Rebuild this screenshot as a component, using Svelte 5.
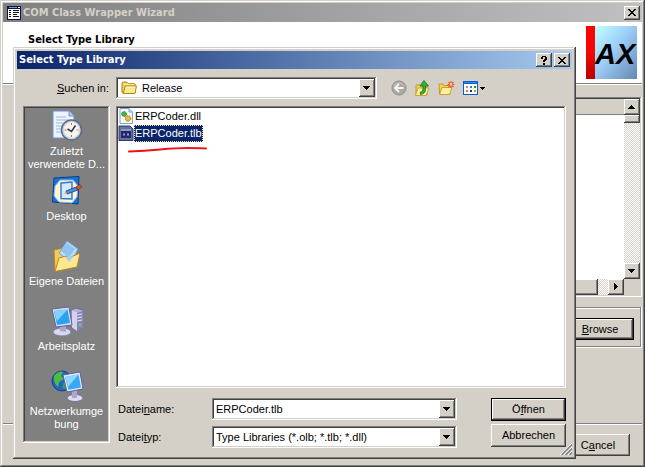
<script>
  const places = [
    { id: 'recent', lines: ['Zuletzt', 'verwendete D...'] },
    { id: 'desktop', lines: ['Desktop'] },
    { id: 'documents', lines: ['Eigene Dateien'] },
    { id: 'computer', lines: ['Arbeitsplatz'] },
    { id: 'network', lines: ['Netzwerkumge', 'bung'] }
  ];
  const files = ['ERPCoder.dll', 'ERPCoder.tlb'];
  let selected = $state('ERPCoder.tlb');
  let fileName = $state('ERPCoder.tlb');

  function pick(name) {
    selected = name;
    fileName = name;
  }
</script>

{#snippet arrow(dir)}
  <svg class="arrow" viewBox="0 0 8 8" width="8" height="8" shape-rendering="crispEdges" aria-hidden="true">
    {#if dir === 'up'}<path d="M3 2h1v1h1v1h1v1h1v1H0V5h1V4h1V3h1z" />
    {:else if dir === 'right'}<path d="M2 0h1v1h1v1h1v1h1v1H5v1H4v1H3v1H2z" />
    {:else}<path d="M0 2h7v1H6v1H5v1H4v1H3V5H2V4H1V3H0z" />{/if}
  </svg>
{/snippet}

{#snippet cross()}
  <svg viewBox="0 0 8 7" width="8" height="7" shape-rendering="crispEdges" aria-hidden="true">
    <path d="M0 0h2v1h1v1h2V1h1V0h2v1H7v1H6v1H5v1h1v1h1v1h1v1H6V6H5V5H3v1H2v1H0V6h1V5h1V4h1V3H2V2H1V1H0z" />
  </svg>
{/snippet}

{#snippet folder()}
  <path d="M1 3.5Q1 2 2.5 2h3L7 3.5h6q1.2 0 1.2 1.2V13H2.2Q1 13 1 12z" fill="#f4cf55" stroke="#a87a12" />
  <path d="M2.5 4.2h11" stroke="#fff3b0" />
  <path d="M4.2 6h11.3L14 13.5H2.2z" fill="#ffe98f" stroke="#b68718" />
  <path d="M5 7.2h9" stroke="#fffbd9" />
{/snippet}

<div class="wizard frame">
  <header class="titlebar inactive">
    <svg class="app-icon" viewBox="0 0 14 14" width="14" height="14" shape-rendering="crispEdges" aria-hidden="true">
      <path d="M0 0h14v14H0z" fill="#0a1450" /><path d="M1 3h12v10H1z" fill="#fff" />
      <path d="M2 1h8v1H2z" fill="#8090d0" /><path d="M11 1h2v1h-2z" fill="#fff" />
      <path d="M2 4h2v1H2zm0 2h2v1H2zm0 2h2v1H2zm0 2h2v1H2zM6 4h6v1H6zm0 2h6v1H6zm0 2h4v1H6zm0 2h6v1H6z" fill="#111" />
    </svg>
    <span class="caption">COM Class Wrapper Wizard</span>
    <button class="raised tool" aria-label="Close">{@render cross()}</button>
  </header>

  <section class="banner">
    <h1>Select Type Library</h1>
    <svg class="logo" viewBox="0 0 51 53" width="51" height="53" aria-label="AX" role="img">
      <defs>
        <linearGradient id="sky" x1="0" y1="0" x2="1" y2="1">
          <stop offset="0" stop-color="#c2ffff" /><stop offset=".45" stop-color="#9ccdf8" /><stop offset="1" stop-color="#6488b0" />
        </linearGradient>
        <linearGradient id="red" x1="0" y1="0" x2="0" y2="1">
          <stop offset="0" stop-color="#f00" /><stop offset=".5" stop-color="#f40808" /><stop offset="1" stop-color="#b80000" />
        </linearGradient>
      </defs>
      <path d="M9 0h42v53H9z" fill="url(#sky)" /><path d="M0 0h9v53H0z" fill="url(#red)" />
      <text x="9" y="38" font-family="Liberation Sans, sans-serif" font-size="29" font-weight="bold" font-style="italic">AX</text>
    </svg>
  </section>

  <main class="wizard-body">
    <div class="list-panel sunken">
      <div class="list-area">
        <div class="list-head"></div>
      </div>
      <div class="vscroll dither">
        <button class="raised sb" aria-label="Scroll up">{@render arrow('up')}</button>
        <div class="raised vthumb"></div>
        <span class="spring"></span>
        <button class="raised sb" aria-label="Scroll down">{@render arrow('down')}</button>
      </div>
      <div class="hscroll">
        <div class="raised hthumb"></div>
        <div class="dither gap"></div>
        <button class="raised sb" aria-label="Scroll right">{@render arrow('right')}</button>
      </div>
    </div>
    <div class="group">
      <button class="push default browse"><span><u>B</u>rowse</span></button>
    </div>
  </main>
  <footer class="wizard-foot">
    <button class="push cancel"><span>C<u>a</u>ncel</span></button>
  </footer>
</div>

<div class="dialog frame" role="dialog" aria-labelledby="dlg-title">
  <header class="titlebar active">
    <span class="caption" id="dlg-title">Select Type Library</span>
    <button class="raised tool help" aria-label="Help">
      <svg viewBox="0 0 6 9" width="6" height="9" shape-rendering="crispEdges" aria-hidden="true">
        <path d="M1 0h4v1h1v3H5v1H4v1H2V4h1V3h1V1H2v2H0V1h1zM2 7h2v2H2z" />
      </svg>
    </button>
    <button class="raised tool" aria-label="Schließen">{@render cross()}</button>
  </header>

  <div class="dialog-body">
    <label class="look-label" for="look"><span><u>S</u>uchen in:</span></label>
    <div class="look-row">
      <div class="combo sunken look">
        <svg class="combo-icon" viewBox="0 0 17 16" width="17" height="16" aria-hidden="true">{@render folder()}</svg>
        <select id="look"><option>Release</option></select>
        <span class="raised drop">{@render arrow('down')}</span>
      </div>
      <div class="tools">
        <button class="flat" aria-label="Zurück">
          <svg viewBox="0 0 16 16" width="16" height="16" aria-hidden="true">
            <circle cx="8" cy="8" r="7" fill="#aaa9a5" stroke="#8e8d89" />
            <path d="M2.5 6a6 5 0 0 1 11 0" fill="none" stroke="#c8c7c3" />
            <path d="M8 4L4 8l4 4M4.5 8H12.5" fill="none" stroke="#f4f3ef" stroke-width="2" />
          </svg>
        </button>
        <button class="flat" aria-label="Übergeordneter Ordner">
          <svg viewBox="0 0 17 16" width="17" height="16" aria-hidden="true">
            <path d="M2 5h4l1 1h6v9H2z" fill="#f6d04e" stroke="#c39a2a" />
            <path d="M4 8h11l-3 7.5H1.5z" fill="#fff0a0" stroke="#c9a13a" />
            <path d="M6 12.5q3-.5 3-3.500V6H6l4-5.500L14.500 6h-3v3.500q0 4-5 5z" fill="#35b035" stroke="#137513" stroke-width=".8" />
          </svg>
        </button>
        <button class="flat" aria-label="Neuer Ordner">
          <svg viewBox="0 0 17 16" width="17" height="16" aria-hidden="true">
            <path d="M1 4h4l1 1.500h6V14H1.500z" fill="#f6d04e" stroke="#c39a2a" />
            <path d="M4 7.500h10l-2.500 7H1.500z" fill="#fff0a0" stroke="#c9a13a" />
            <path d="M13 1v7M9.500 4.500h7M10.500 2l5 5M15.500 2l-5 5" stroke="#f04a1c" stroke-width="1.100" />
            <circle cx="13" cy="4.500" r="1.400" fill="#ffc0a0" />
          </svg>
        </button>
        <button class="flat" aria-label="Ansichten">
          <svg viewBox="0 0 23 16" width="23" height="16" shape-rendering="crispEdges" aria-hidden="true">
            <path d="M1 1h15v14H1z" fill="#0a5cd0" /><path d="M2 4h13v10H2z" fill="#fff" /><path d="M2 2h13v1H2z" fill="#2f86ee" />
            <path d="M4 6h2v2H4z" fill="#9a8fc0" /><path d="M8 6h2v2H8z" fill="#2878d8" /><path d="M12 6h2v2h-2z" fill="#189018" />
            <path d="M4 10h2v2H4z" fill="#e87040" /><path d="M8 10h2v2H8z" fill="#103088" /><path d="M12 10h2v2h-2z" fill="#c89010" />
            <path d="M18 7h5v1h-1v1h-1v1h-1V9h-1V8h-1z" />
          </svg>
        </button>
      </div>
    </div>

    <nav class="places sunken" aria-label="Orte">
      {#each places as place}
        <button class="place">
          <svg viewBox="0 0 32 32" width="32" height="32" aria-hidden="true">
            {#if place.id === 'recent'}
              <path d="M2 1h16l5 5v22H2z" fill="#edf4ff" stroke="#6e92cf" />
              <path d="M18 1v5h5" fill="#b7cff4" stroke="#6e92cf" />
              <path d="M5 7h10M5 10h14M5 13h8M5 16h6M5 19h5M5 22h6" stroke="#9cb9e8" />
              <circle cx="20.500" cy="20" r="10" fill="#bcd5ef" stroke="#606b7c" stroke-width="1.500" />
              <circle cx="20.500" cy="20" r="7.500" fill="#fff3e8" stroke="#e8f2fb" />
              <path d="M16.500 19l4 2.500 4-6" fill="none" stroke="#243b66" stroke-width="1.600" />
              <path d="M20.500 13v2M20.500 25v2M13.500 20h2M25.500 20h2" stroke="#ca6c38" />
            {:else if place.id === 'desktop'}
              <path d="M3 3l25-1.500L27 29 1.500 27z" fill="#1674d8" stroke="#0b3c8c" stroke-linejoin="round" />
              <path d="M9 5h13l5 6-1 11-5 6-13-1-5-6 1-10z" fill="#fff5cf" stroke="#7fb5ee" />
              <path d="M10 8l11-1v17l-11-.5z" fill="#d6e9ff" stroke="#2f75cc" stroke-width="1.400" />
              <path d="M15 16l10-4 2 3-11 4z" fill="#4a8ee0" stroke="#173c78" stroke-width=".8" />
              <path d="M25 12l4-2.500 2 2.500-4 3z" fill="#e2502c" stroke="#7c2614" stroke-width=".7" />
              <path d="M12.500 19l2.500-3 1 3z" fill="#e8b96a" />
            {:else if place.id === 'documents'}
              <path d="M3 10l9-2 3 3v18L4 31z" fill="#f5cb55" stroke="#b4862a" />
              <path d="M16 1l11 8-7 14-12-10z" fill="#b9dcfb" stroke="#6aa5df" />
              <path d="M16 3l8 6-6 8-8-6z" fill="#8ec3f4" />
              <path d="M8 18l7-2 3 2 11-5-3 14-22 4.500z" fill="#ffe78e" stroke="#b4862a" />
              <path d="M14 17l9-1-5 6z" fill="#a6d0f0" />
            {:else if place.id === 'computer'}
              <path d="M20 5l5-2 7 2v18l-6 3-6-4z" fill="#b3b0da" stroke="#6b689a" />
              <path d="M21 5.500l5 2V26l-5-3.500z" fill="#d3d1ec" />
              <path d="M26 8l5.500-2v17L26 26z" fill="#8885bd" />
              <path d="M26 10l5-1M26 13l5-1M26 16l5-1" stroke="#e6e5f5" />
              <circle cx="29" cy="20" r="1.200" fill="#5fe04c" />
              <ellipse cx="11" cy="27" rx="9" ry="4" fill="#d9d8ee" stroke="#7d7ba6" />
              <path d="M9 19l6 1v7l-6-1z" fill="#a9a6cf" />
              <path d="M1 4l17-2 3 18-16 2z" fill="#dcdcf2" stroke="#5d62a0" />
              <path d="M3 6l13.500-1.500L19 18 6 20z" fill="#2ba1f2" />
              <path d="M3 6l13.500-1.500L6 16z" fill="#80d3ff" />
            {:else}
              <circle cx="11" cy="11" r="10" fill="#2463c6" stroke="#163f88" />
              <path d="M3 6q5-6 9-4l-2 4 3 3-5 3-1 5q-5-4-4-11z" fill="#4dbd3d" />
              <path d="M13 12l5 1-3 6-4-1z" fill="#3da632" />
              <ellipse cx="24" cy="28" rx="8" ry="3.500" fill="#dcdcf0" stroke="#7774a4" />
              <path d="M21 20l5 1v7h-5z" fill="#aaa7d0" />
              <path d="M12 5l17-3 3 17-16 3z" fill="#e4e6f6" stroke="#5d62a0" />
              <path d="M14 7l13.500-2.500L30 17.500l-12.500 2.300z" fill="#36a8f4" />
              <path d="M14 7l13.500-2.500L17 17z" fill="#8ad8ff" />
            {/if}
          </svg>
          {#each place.lines as line}<span>{line}</span>{/each}
        </button>
      {/each}
    </nav>

    <div class="work">
      <div class="files sunken" role="listbox" aria-label="Dateien">
        {#each files as file}
          <button class="file" role="option" aria-selected={selected === file} onclick={() => pick(file)}>
            <svg viewBox="0 0 16 16" width="16" height="16" aria-hidden="true">
              {#if file.endsWith('.dll')}
                <path d="M2 .5h9L14.500 4v11.500H2z" fill="#f6faff" stroke="#7f9fd2" />
                <path d="M11 .5V4h3.500" fill="#c5d8f4" stroke="#7f9fd2" />
                <circle cx="6" cy="6" r="2.500" fill="#48b040" stroke="#28802a" stroke-width=".8" stroke-dasharray="1.500 .8" />
                <circle cx="10" cy="10.500" r="2.800" fill="#e6be32" stroke="#a07c14" stroke-width="1" stroke-dasharray="1.500 .8" />
              {:else}
                <path d="M1 1h11l3 3v11.500H1z" fill="#667398" stroke="#2b3a70" />
                <path d="M3 5h10v8H3z" fill="#1d2a70" /><path d="M3 4h10v2H3z" fill="#8d9ac4" />
                <path d="M5 9.500h2" stroke="#ff7070" stroke-width="2" /><path d="M9 9.500h2" stroke="#8fa0ff" stroke-width="2" />
              {/if}
            </svg>
            <span class="name">{file}</span>
          </button>
        {/each}
        <svg class="mark" viewBox="0 0 80 8" width="80" height="8" aria-hidden="true">
          <path d="M1 5.500Q16 5 32 3.500T60 2T78 2.500" fill="none" stroke="#f01018" stroke-width="2" stroke-linecap="round" />
        </svg>
      </div>

      <div class="form">
        <div class="fields">
          <label for="fname"><span>Datei<u>n</u>ame:</span></label>
          <div class="combo sunken">
            <input id="fname" type="text" bind:value={fileName} />
            <span class="raised drop">{@render arrow('down')}</span>
          </div>
          <label for="ftype"><span>Datei<u>t</u>yp:</span></label>
          <div class="combo sunken">
            <select id="ftype"><option>Type Libraries (*.olb; *.tlb; *.dll)</option></select>
            <span class="raised drop">{@render arrow('down')}</span>
          </div>
        </div>
        <div class="actions">
          <button class="push default"><span>Ö<u>f</u>fnen</span></button>
          <button class="push"><span>Abbrechen</span></button>
        </div>
      </div>
    </div>
  </div>
  <svg class="grip" viewBox="0 0 12 12" width="12" height="12" aria-hidden="true">
    <path d="M0 12L12 0M4 12l8-8M8 12l4-4" stroke="#fff" />
    <path d="M1.500 12L12 1.500M5.500 12L12 5.500M9.500 12L12 9.500" stroke="#808080" stroke-width="1.500" />
  </svg>
</div>

<style>
  :global(body) {
    background: #d4d0c8;
  }
  .wizard, .dialog {
    font: 11px/13px "Liberation Sans", Arial, sans-serif;
    color: #000;
  }
  .wizard *, .dialog * {
    box-sizing: border-box;
  }
  button, input, select {
    font: inherit;
    color: inherit;
    margin: 0;
    padding: 0;
    border: 0;
    border-radius: 0;
    outline: 0;
    background: none;
  }
  svg {
    display: block;
    flex: none;
  }
  .frame {
    box-sizing: border-box;
    background: #d4d0c8;
    box-shadow: inset -1px -1px #404040, inset 1px 1px #d4d0c8, inset -2px -2px #808080, inset 2px 2px #fff;
  }
  .wizard {
    display: flex;
    flex-direction: column;
    min-height: 100vh;
    padding: 3px;
  }
  .dialog {
    position: absolute;
    top: 47px;
    left: 13px;
    right: 69px;
    padding: 4px;
  }

  .raised {
    background: #d4d0c8;
    box-shadow: inset -1px -1px #404040, inset 1px 1px #fff, inset -2px -2px #808080;
  }
  .sunken {
    padding: 2px;
    background: #fff;
    box-shadow: inset -1px -1px #fff, inset 1px 1px #808080, inset -2px -2px #d4d0c8, inset 2px 2px #404040;
  }

  .titlebar {
    display: flex;
    align-items: center;
    height: 18px;
    padding: 0 2px;
    color: #fff;
  }
  .inactive {
    height: 19px;
    background: linear-gradient(90deg, #808080, #c0c0c0);
    color: #d4d0c8;
    gap: 2px;
    padding-left: 4px;
  }
  .active {
    background: linear-gradient(90deg, #0a246a, #a6caf0);
  }
  .caption, h1 {
    flex: 1;
    font: bold 11px/14px "DejaVu Sans Condensed", Tahoma, sans-serif;
  }
  .tool {
    display: flex;
    align-items: center;
    justify-content: center;
    width: 16px;
    height: 14px;
  }
  .help {
    margin-right: 2px;
  }

  .banner {
    display: flex;
    align-items: flex-start;
    justify-content: space-between;
    height: 62px;
    padding: 4px 5px 0 25px;
    background: #fff;
    border-bottom: 1px solid #808080;
  }
  h1 {
    margin: 7px 0 0;
  }

  .wizard-body {
    display: flex;
    flex-direction: column;
    gap: 10px;
    padding: 12px 0 0 20px;
    border-top: 1px solid #fff;
  }
  .list-panel {
    display: grid;
    grid-template: 180px 16px / 1fr 16px;
    background: #d4d0c8;
  }
  .list-area {
    background: #fff;
  }
  .list-head {
    height: 16px;
    background: #d4d0c8;
    border-bottom: 1px solid #808080;
  }
  .dither {
    background: repeating-conic-gradient(#fff 0 25%, #d4d0c8 0 50%) 0 0 / 2px 2px;
  }
  .vscroll {
    display: flex;
    flex-direction: column;
  }
  .sb {
    display: flex;
    align-items: center;
    justify-content: center;
    width: 16px;
    height: 16px;
  }
  .vthumb {
    height: 8px;
  }
  .spring {
    flex: 1;
  }
  .hscroll {
    display: flex;
  }
  .hthumb {
    flex: 1;
  }
  .gap {
    width: 10px;
  }
  .group {
    display: flex;
    justify-content: flex-end;
    padding: 11px 8px 8px;
    box-shadow: inset -1px -1px #fff, inset 1px 1px #808080, inset -2px -2px #808080, inset 2px 2px #fff;
  }
  .wizard-foot {
    display: flex;
    justify-content: flex-end;
    margin-top: auto;
    padding: 10px 12px 8px;
    border-top: 1px solid #808080;
    box-shadow: inset 0 1px #fff;
  }
  .push {
    display: block;
    width: 75px;
    height: 23px;
    background: #d4d0c8;
    text-align: center;
    box-shadow: inset -1px -1px #404040, inset 1px 1px #fff, inset -2px -2px #808080;
  }
  .default {
    border: 1px solid #000;
  }
  .browse {
    width: 68px;
    height: 22px;
  }
  .cancel {
    width: 64px;
    height: 22px;
  }

  .dialog-body {
    display: grid;
    grid-template-columns: 87px minmax(0, 1fr);
    gap: 7px 6px;
    padding: 8px 6px 7px;
  }
  .look-label {
    align-self: center;
    padding-right: 1px;
    text-align: right;
  }
  .look-row {
    display: flex;
    align-items: center;
    gap: 14px;
  }
  .combo {
    display: flex;
    height: 22px;
    position: relative;
  }
  .look {
    flex: 1;
  }
  .combo-icon {
    position: absolute;
    left: 5px;
    top: 3px;
    pointer-events: none;
  }
  .combo select, .combo input {
    appearance: none;
    width: 100%;
    height: 100%;
    padding: 0 18px 0 2px;
  }
  .look select {
    padding-left: 24px;
  }
  .drop {
    position: absolute;
    top: 2px;
    right: 2px;
    bottom: 2px;
    width: 16px;
    display: flex;
    align-items: center;
    justify-content: center;
    pointer-events: none;
  }
  .tools {
    display: flex;
    gap: 7px;
    padding-right: 81px;
  }

  .places {
    align-self: start;
    display: flex;
    flex-direction: column;
    min-height: 337px;
    padding-top: 4px;
    background: #808080;
    color: #fff;
  }
  .place {
    display: flex;
    flex-direction: column;
    align-items: center;
    height: 65px;
  }
  .place svg {
    margin-bottom: 3px;
  }
  .work {
    display: flex;
    flex-direction: column;
    gap: 10px;
  }
  .files {
    position: relative;
    min-height: 282px;
  }
  .file {
    display: flex;
    height: 17px;
  }
  .name {
    padding: 1px 0;
    border: 1px solid transparent;
  }
  .file[aria-selected="true"] .name {
    background: #0a246a;
    color: #fff;
    border: 1px dotted #f5db95;
  }
  .mark {
    position: absolute;
    left: 12px;
    top: 40px;
  }
  .form {
    display: flex;
    gap: 34px;
  }
  .fields {
    flex: 1;
    display: grid;
    grid-template-columns: 94px minmax(0, 1fr);
    align-items: center;
    gap: 6px 2px;
  }
  .fields label {
    padding-left: 2px;
  }
  .actions {
    display: flex;
    flex-direction: column;
    gap: 3px;
  }
  .grip {
    position: absolute;
    right: 4px;
    bottom: 4px;
  }
</style>
